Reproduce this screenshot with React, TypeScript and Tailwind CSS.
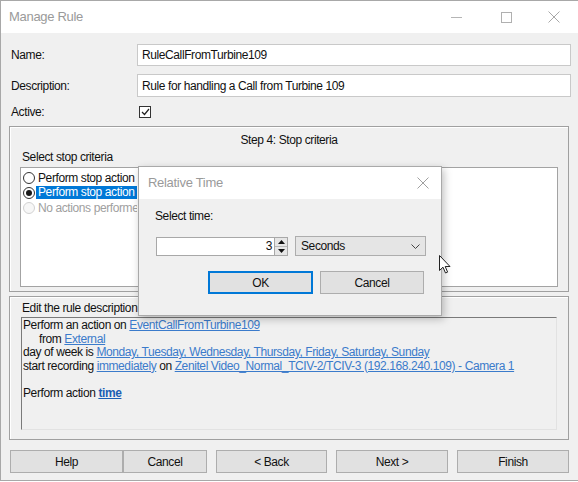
import React from "react";

function Radio({ checked, disabled }: { checked?: boolean; disabled?: boolean }) {
  return (
    <span
      className={
        disabled
          ? "w-[12px] h-[12px] rounded-full border border-[#d2d2d2] bg-[#f7f7f7] shrink-0"
          : "w-[12px] h-[12px] rounded-full border border-[#333] bg-white flex items-center justify-center shrink-0"
      }
    >
      {checked && <span className="w-[6px] h-[6px] rounded-full bg-[#1a1a1a]" />}
    </span>
  );
}

function Btn({ label, w, primary }: { label: string; w: string; primary?: boolean }) {
  return (
    <div
      className={`${w} h-[23px] flex items-center justify-center text-[12px] text-[#111] bg-[#e1e1e1] ${
        primary ? "border-2 border-[#0078d7]" : "border border-[#adadad]"
      }`}
    >
      {label}
    </div>
  );
}

function A({ children, bold }: { children: React.ReactNode; bold?: boolean }) {
  return (
    <span className={bold ? "text-[#1b5eb4] underline font-bold" : "text-[#3b7bcb] underline"}>
      {children}
    </span>
  );
}

export default function App() {
  return (
    <div className="relative w-[578px] h-[481px] bg-[#f0f0f0] border-l border-t border-b border-[#a8a8a8] font-['Liberation_Sans',Arial,sans-serif] text-[12px] text-[#111] tracking-[-0.4px] overflow-hidden">
      {/* title bar */}
      <div className="h-[32px] bg-white flex items-center pl-[8px]">
        <span className="text-[13px] text-[#9a9a9a] tracking-[-0.3px]">Manage Rule</span>
        <div className="ml-auto flex items-center h-full">
          <div className="w-[48px] flex justify-center">
            <span className="w-[11px] h-px bg-[#b5b5b5]" />
          </div>
          <div className="w-[48px] flex justify-center ml-[2px]">
            <span className="w-[11px] h-[11px] border border-[#b0b0b0]" />
          </div>
          <div className="w-[48px] flex justify-center">
            <svg width="12" height="12" viewBox="0 0 12 12">
              <path d="M0.5 0.5 L11.5 11.5 M11.5 0.5 L0.5 11.5" stroke="#a8a8a8" strokeWidth="1" />
            </svg>
          </div>
        </div>
      </div>

      {/* fields */}
      <div className="pl-[10px] pr-[7px]">
        <div className="flex items-center mt-[11px]">
          <span className="w-[126px]">Name:</span>
          <div className="flex-1 h-[22px] bg-white border border-[#c9c9c9] flex items-center pl-[4px]">
            RuleCallFromTurbine109
          </div>
        </div>
        <div className="flex items-center mt-[8px]">
          <span className="w-[126px]">Description:</span>
          <div className="flex-1 h-[23px] bg-white border border-[#c9c9c9] flex items-center pl-[4px]">
            Rule for handling a Call from Turbine 109
          </div>
        </div>
        <div className="flex items-center mt-[9px] h-[12px]">
          <span className="w-[128px]">Active:</span>
          <span className="w-[12px] h-[12px] border border-[#333] bg-white flex items-center justify-center">
            <svg width="9" height="8" viewBox="0 0 9 8">
              <path d="M1 4 L3.5 6.5 L8 1" fill="none" stroke="#222" strokeWidth="1.2" />
            </svg>
          </span>
        </div>
      </div>

      {/* step panel */}
      <div className="ml-[8px] mt-[8px] w-[560px] h-[166px] border border-[#a0a0a0] shadow-[inset_1px_1px_0_#fff] flex flex-col">
        <div className="text-center mt-[6px] leading-[14px]">Step 4: Stop criteria</div>
        <div className="ml-[12px] mt-[3px] leading-[14px]">Select stop criteria</div>
        <div className="ml-[10px] mt-[3px] w-[538px] h-[120px] bg-white border border-[#a3a3a3] pt-[2px] pl-[2px]">
          <div className="flex items-center h-[15px] gap-[2px]">
            <Radio />
            <span className="w-[100px] overflow-hidden whitespace-nowrap px-[1px]">Perform stop action on event</span>
          </div>
          <div className="flex items-center h-[15px] gap-[1px]">
            <Radio checked />
            <span className="w-[101px] overflow-hidden whitespace-nowrap px-[2px] h-[13px] leading-[13px] bg-[#0078d7] text-white">
              Perform stop action after time
            </span>
          </div>
          <div className="flex items-center h-[15px] gap-[2px] text-[#a0a0a0]">
            <Radio disabled />
            <span className="w-[100px] overflow-hidden whitespace-nowrap px-[1px]">No actions performed on stop</span>
          </div>
        </div>
      </div>

      {/* rule description panel */}
      <div className="ml-[8px] mt-[4px] w-[560px] h-[144px] border border-[#a0a0a0] shadow-[inset_1px_1px_0_#fff]">
        <div className="ml-[12px] mt-[4px] leading-[14px]">Edit the rule description</div>
        <div className="ml-[11px] mt-[2px] w-[536px] h-[113px] border-t border-l border-[#7a7a7a] border-r border-b border-r-[#e2e2e2] border-b-[#e2e2e2] pl-[1px] pt-[1px] leading-[13.6px] whitespace-nowrap">
          <div>
            Perform an action on <A>EventCallFromTurbine109</A>
          </div>
          <div className="pl-[16px]">
            from <A>External</A>
          </div>
          <div>
            day of week is <A>Monday, Tuesday, Wednesday, Thursday, Friday, Saturday, Sunday</A>
          </div>
          <div>
            start recording <A>immediately</A> on{" "}
            <A>Zenitel Video_Normal_TCIV-2/TCIV-3 (192.168.240.109) - Camera 1</A>
          </div>
          <div className="h-[13.6px]" />
          <div>
            Perform action <A bold>time</A>
          </div>
        </div>
      </div>

      {/* buttons */}
      <div className="flex items-center mt-[10px] ml-[9px]">
        <Btn label="Help" w="w-[113px]" />
        <Btn label="Cancel" w="w-[84px]" />
        <div className="ml-[9px]">
          <Btn label="< Back" w="w-[111px]" />
        </div>
        <div className="ml-[9px]">
          <Btn label="Next >" w="w-[112px]" />
        </div>
        <div className="ml-[9px]">
          <Btn label="Finish" w="w-[112px]" />
        </div>
      </div>

      {/* Relative Time dialog */}
      <div className="absolute left-[137px] top-[165px] w-[304px] h-[150px] bg-[#f0f0f0] border border-[#a9a9a9] shadow-[2px_3px_8px_rgba(0,0,0,0.25)]">
        <div className="h-[32px] bg-white flex items-center pl-[9px] pr-[12px]">
          <span className="text-[13px] text-[#9a9a9a] tracking-[-0.3px]">Relative Time</span>
          <svg className="ml-auto" width="12" height="12" viewBox="0 0 12 12">
            <path d="M0.5 0.5 L11.5 11.5 M11.5 0.5 L0.5 11.5" stroke="#a0a0a0" strokeWidth="1" />
          </svg>
        </div>
        <div className="pl-[16px] mt-[10px] leading-[14px]">Select time:</div>
        <div className="flex items-center mt-[13px] pl-[17px]">
          <div className="w-[119px] h-[19px] bg-white border border-[#a8a8a8] flex items-center justify-end pr-[2px]">
            3
          </div>
          <div className="w-[13px] h-[19px] border border-l-0 border-[#a8a8a8] bg-white flex flex-col">
            <div className="flex-1 bg-[#e6e6e6] border-b border-[#b8b8b8] flex items-center justify-center">
              <svg width="7" height="4" viewBox="0 0 7 4">
                <path d="M0 4 L3.5 0 L7 4 Z" fill="#111" />
              </svg>
            </div>
            <div className="flex-1 bg-[#e6e6e6] flex items-center justify-center">
              <svg width="7" height="4" viewBox="0 0 7 4">
                <path d="M0 0 L3.5 4 L7 0 Z" fill="#111" />
              </svg>
            </div>
          </div>
          <div className="ml-[7px] w-[131px] h-[20px] bg-[#e5e5e5] border border-[#adadad] flex items-center pl-[5px] pr-[5px]">
            <span>Seconds</span>
            <svg className="ml-auto" width="9" height="5" viewBox="0 0 9 5">
              <path d="M0.5 0.5 L4.5 4.5 L8.5 0.5" fill="none" stroke="#444" strokeWidth="1" />
            </svg>
          </div>
        </div>
        <div className="flex items-center mt-[15px] pl-[69px] gap-[7px]">
          <Btn label="OK" w="w-[105px]" primary />
          <Btn label="Cancel" w="w-[104px]" />
        </div>
      </div>

      {/* mouse cursor */}
      <svg className="absolute left-[438px] top-[254px]" width="12" height="19" viewBox="0 0 12 19">
        <path
          d="M0.5 0.5 L0.5 15.5 L4 12.2 L6.5 18 L8.6 17.1 L6.2 11.5 L11 11.5 Z"
          fill="#fff"
          stroke="#222"
          strokeWidth="1"
          strokeLinejoin="round"
        />
      </svg>
    </div>
  );
}
